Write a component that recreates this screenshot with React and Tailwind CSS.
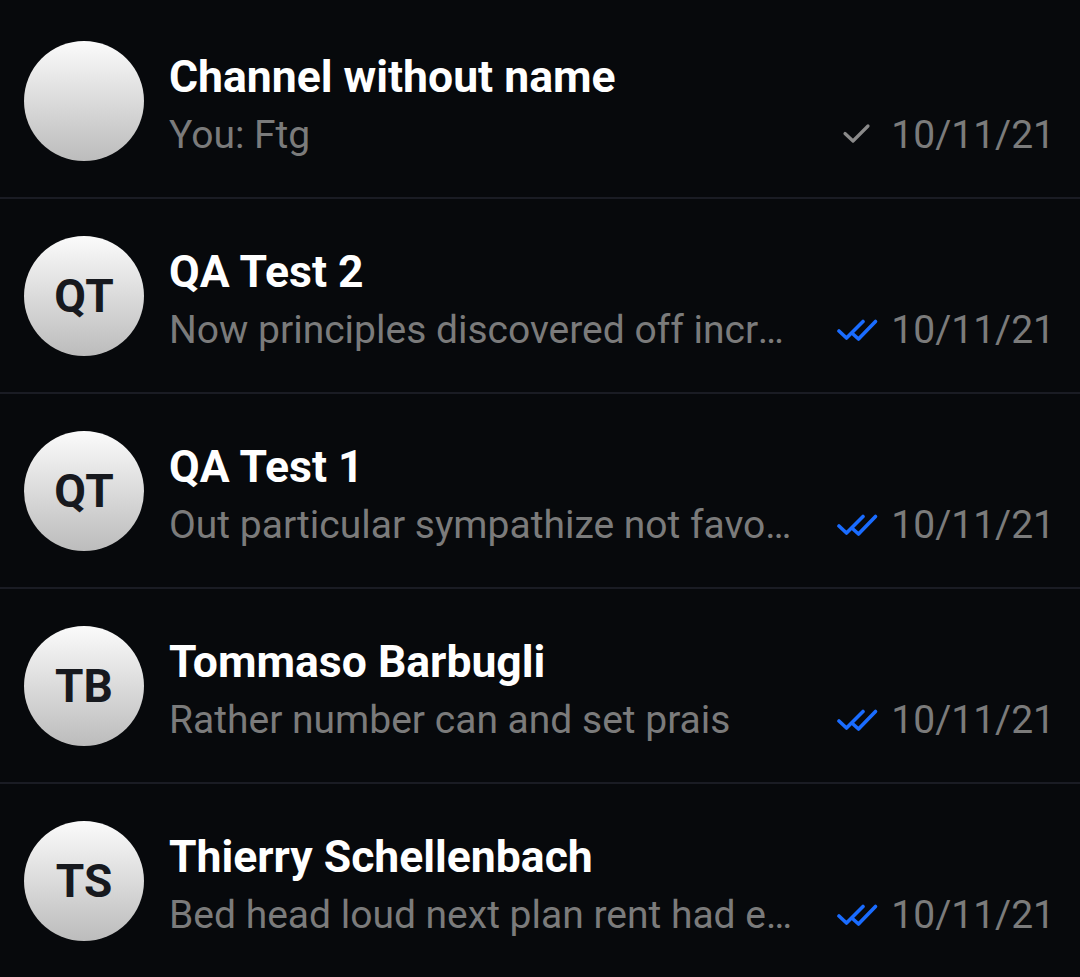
import React from 'react';

const chats = [
  { name: 'Channel without name', initials: '', preview: 'You: Ftg', read: false },
  { name: 'QA Test 2', initials: 'QT', preview: 'Now principles discovered off increasing how reasonably middletons', read: true },
  { name: 'QA Test 1', initials: 'QT', preview: 'Out particular sympathize not favourable introduced insipidity', read: true },
  { name: 'Tommaso Barbugli', initials: 'TB', preview: 'Rather number can and set prais', read: true },
  { name: 'Thierry Schellenbach', initials: 'TS', preview: 'Bed head loud next plan rent had easily', read: true },
];

function SingleCheck() {
  return (
    <svg width="44" height="24" viewBox="0 0 44 24" fill="none">
      <path d="M8 10.5l8 7.5L31 3" stroke="#8a8a8a" strokeWidth="3.2" strokeLinecap="round" strokeLinejoin="round" />
    </svg>
  );
}

function DoubleCheck() {
  return (
    <svg width="44" height="24" viewBox="0 0 44 24" fill="none">
      <path d="M2 13l7.5 7L26 3.5" stroke="#1a6cff" strokeWidth="3.6" strokeLinecap="round" strokeLinejoin="round" />
      <path d="M16.5 16.5l5 4.5L38.5 3.5" stroke="#1a6cff" strokeWidth="3.6" strokeLinecap="round" strokeLinejoin="round" />
    </svg>
  );
}

function Row({ chat, first }) {
  return (
    <div className={`flex items-center border-b-2 border-[#1a1c24] pl-6 pr-[25px] ${first ? 'h-[199px] pt-1' : 'h-[195px]'}`}>
      <div className="w-[120px] h-[120px] shrink-0 rounded-full bg-gradient-to-b from-[#fbfbfb] to-[#bcbcbc] flex items-center justify-center">
        <span className="text-[46px] font-bold text-[#17191e] leading-none">{chat.initials}</span>
      </div>
      <div className="flex-1 min-w-0 ml-[25px] pt-[8px] flex flex-col">
        <div className="text-[44.5px] font-bold text-white leading-[52px] truncate">{chat.name}</div>
        <div className="flex items-center mt-[8px]">
          <div className="flex-1 min-w-0 truncate text-[39px] text-[#7b7b7b] leading-[48px] pr-[39px]">{chat.preview}</div>
          <div className="flex items-center gap-[10px] shrink-0">
            {chat.read ? <DoubleCheck /> : <SingleCheck />}
            <span className="text-[39px] text-[#7b7b7b] leading-[48px]">10/11/21</span>
          </div>
        </div>
      </div>
    </div>
  );
}

export default function App() {
  return (
    <div className="w-[1080px] h-[977px] overflow-hidden bg-[#07090c]" style={{ fontFamily: 'Roboto, sans-serif' }}>
      {chats.map((chat, i) => (
        <Row key={i} chat={chat} first={i === 0} />
      ))}
    </div>
  );
}
